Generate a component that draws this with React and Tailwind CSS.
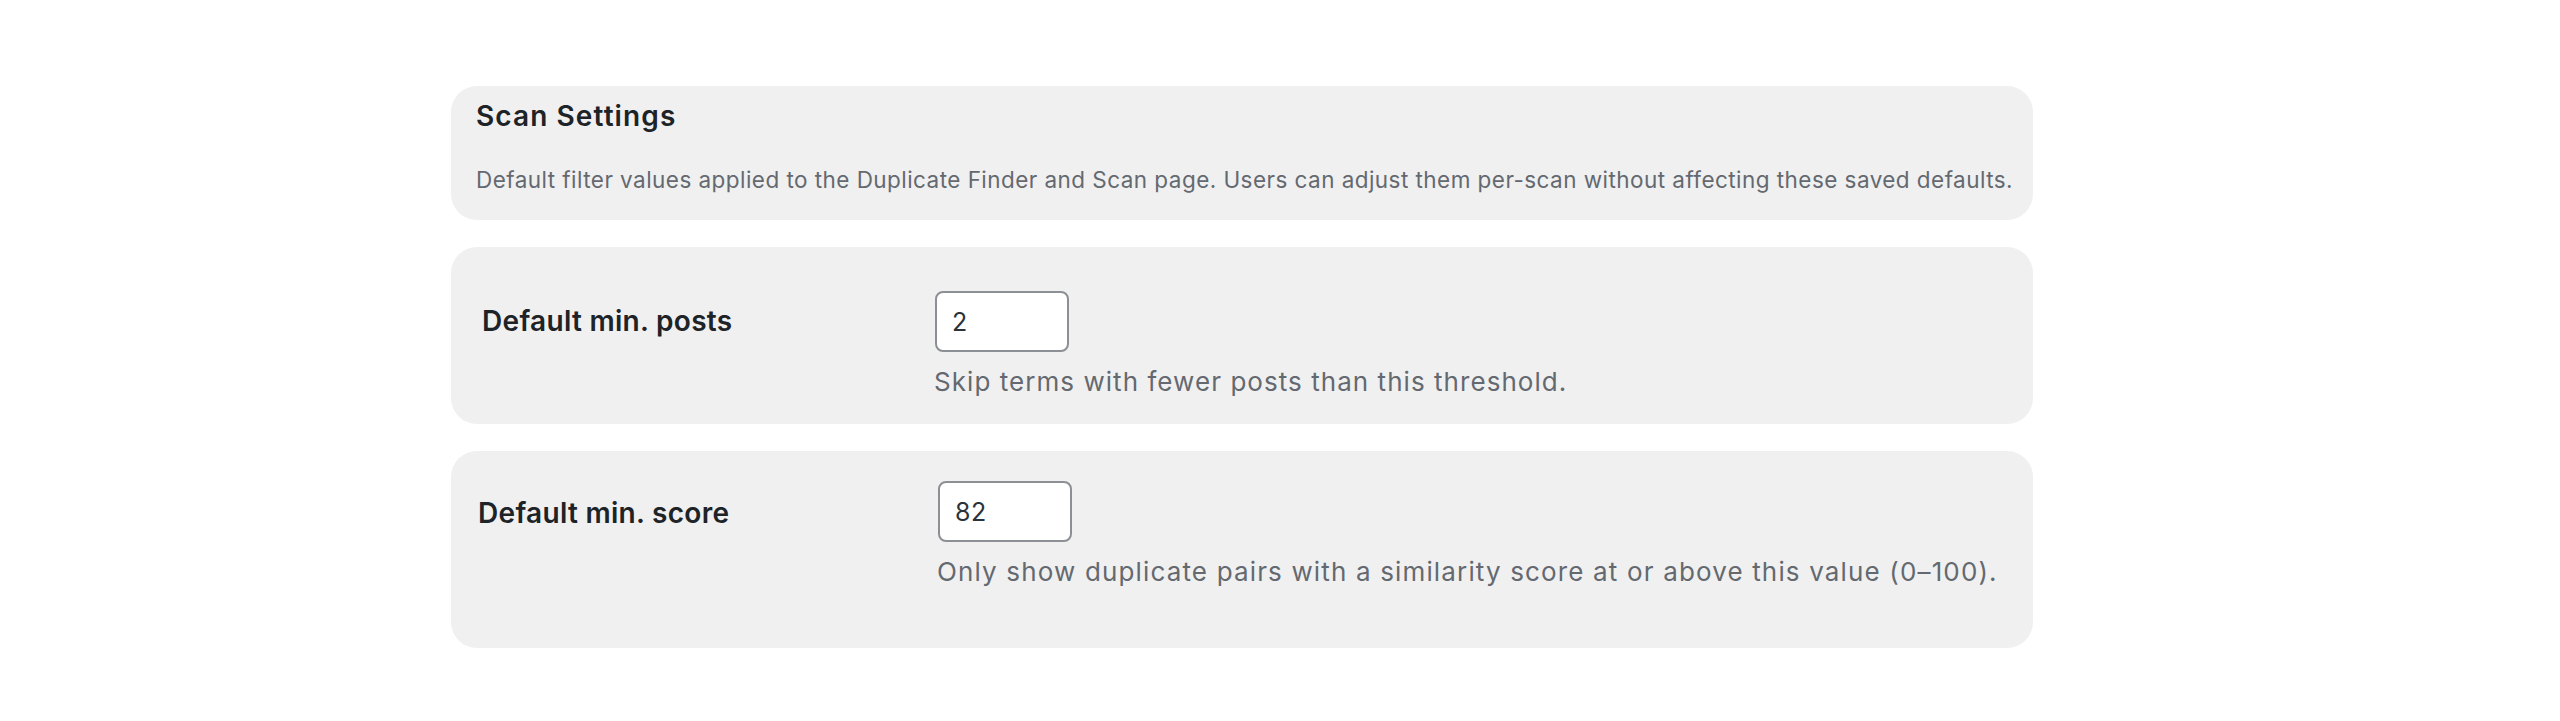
import React from 'react';

const font = "font-['Inter','Noto_Sans',sans-serif]";

function Field({ label, value, help, card, labelW, labelMt, helpTrack }) {
  return (
    <div className={`flex bg-[#f0f0f0] rounded-[26px] ${card}`}>
      <div className={`shrink-0 ${labelW} ${labelMt} text-[28px] leading-[34px] font-semibold tracking-[0.3px] text-[#1d2327]`}>
        {label}
      </div>
      <div className="flex flex-col">
        <input
          type="text"
          defaultValue={value}
          className="w-[134px] h-[61px] px-[15px] bg-white border-2 border-[#8c8f94] rounded-[8px] text-[25px] tracking-[0.5px] text-[#2c3338] outline-none"
        />
        <p className={`mt-[13px] -ml-[1px] text-[26px] leading-[34px] ${helpTrack} text-[#646970]`}>{help}</p>
      </div>
    </div>
  );
}

export default function App() {
  return (
    <div className={`w-full min-h-[721px] bg-white ${font}`}>
      <div className="w-[1582px] ml-[451px] pt-[86px] flex flex-col gap-[27px]">
        <div className="bg-[#f0f0f0] rounded-[26px] pl-[25px] pt-[13px] pb-[25px]">
          <h2 className="text-[28px] leading-[34px] font-semibold tracking-[1.1px] text-[#1d2327]">Scan Settings</h2>
          <p className="mt-[32px] text-[22.5px] leading-[30px] tracking-[0.45px] text-[#646970]">
            Default filter values applied to the Duplicate Finder and Scan page. Users can adjust them per-scan without affecting these saved defaults.
          </p>
        </div>

        <Field
          label="Default min. posts"
          value="2"
          help="Skip terms with fewer posts than this threshold."
          card="pl-[31px] pt-[44px] pb-[25px]"
          labelW="w-[453px]"
          labelMt="mt-[13px]"
          helpTrack="tracking-[1.05px]"
        />

        <Field
          label="Default min. score"
          value="82"
          help="Only show duplicate pairs with a similarity score at or above this value (0–100)."
          card="pl-[27px] pt-[30px] pb-[59px]"
          labelW="w-[460px]"
          labelMt="mt-[15px]"
          helpTrack="tracking-[1.15px]"
        />
      </div>
    </div>
  );
}
